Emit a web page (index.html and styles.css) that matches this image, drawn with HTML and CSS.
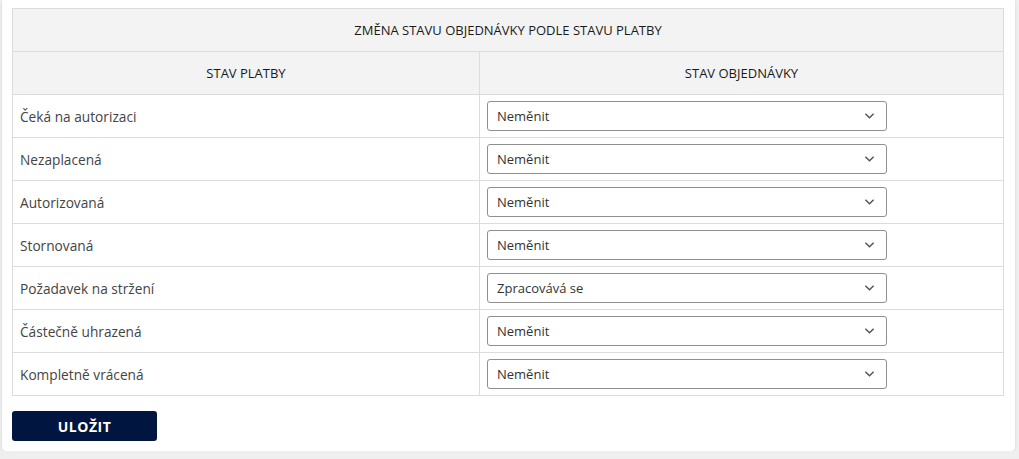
FILE: index.html
```html
<!DOCTYPE html>
<html lang="cs">
<head>
<meta charset="utf-8">
<link rel="stylesheet" href="styles.css">
</head>
<body>
<div class="card">
  <table class="status-table">
    <colgroup><col class="col-a"><col class="col-b"></colgroup>
    <thead>
      <tr><th colspan="2" class="title">ZMĚNA STAVU OBJEDNÁVKY PODLE STAVU PLATBY</th></tr>
      <tr><th>STAV PLATBY</th><th>STAV OBJEDNÁVKY</th></tr>
    </thead>
    <tbody>
      <tr><td>Čeká na autorizaci</td><td><div class="select"><span>Neměnit</span><svg class="chev" viewBox="0 0 12 8"><path d="M1.5 1.5 6 6l4.5-4.5"/></svg></div></td></tr>
      <tr><td>Nezaplacená</td><td><div class="select"><span>Neměnit</span><svg class="chev" viewBox="0 0 12 8"><path d="M1.5 1.5 6 6l4.5-4.5"/></svg></div></td></tr>
      <tr><td>Autorizovaná</td><td><div class="select"><span>Neměnit</span><svg class="chev" viewBox="0 0 12 8"><path d="M1.5 1.5 6 6l4.5-4.5"/></svg></div></td></tr>
      <tr><td>Stornovaná</td><td><div class="select"><span>Neměnit</span><svg class="chev" viewBox="0 0 12 8"><path d="M1.5 1.5 6 6l4.5-4.5"/></svg></div></td></tr>
      <tr><td>Požadavek na stržení</td><td><div class="select"><span>Zpracovává se</span><svg class="chev" viewBox="0 0 12 8"><path d="M1.5 1.5 6 6l4.5-4.5"/></svg></div></td></tr>
      <tr><td>Částečně uhrazená</td><td><div class="select"><span>Neměnit</span><svg class="chev" viewBox="0 0 12 8"><path d="M1.5 1.5 6 6l4.5-4.5"/></svg></div></td></tr>
      <tr><td>Kompletně vrácená</td><td><div class="select"><span>Neměnit</span><svg class="chev" viewBox="0 0 12 8"><path d="M1.5 1.5 6 6l4.5-4.5"/></svg></div></td></tr>
    </tbody>
  </table>
  <button class="save">ULOŽIT</button>
</div>
</body>
</html>
```
FILE: styles.css
```css
html, body {
  margin: 0;
  padding: 0;
  background: #efefef;
  font-family: "Open Sans", "Liberation Sans", sans-serif;
  color: #333;
}
.card {
  margin-left: 2px;
  width: 1013px;
  height: 451px;
  box-sizing: border-box;
  background: #fff;
  border-radius: 0 0 4px 4px;
  box-shadow: 0 1px 3px rgba(0,0,0,0.12);
  padding: 8px 10px 0 10px;
}
.status-table {
  width: 992px;
  border-collapse: collapse;
  table-layout: fixed;
}
.col-a { width: 467px; }
.status-table th, .status-table td {
  border: 1px solid #dcdcdc;
  height: 43px;
  padding: 0;
  box-sizing: border-box;
}
.status-table th {
  background: #f3f3f3;
  font-size: 13px;
  font-weight: 500;
  color: #1a1a1a;
  text-align: center;
}
.status-table td {
  font-size: 13.7px;
  color: #444;
}
.status-table td:first-child,
.status-table td:last-child {
  padding-left: 7px;
}
.select {
  width: 400px;
  height: 30px;
  box-sizing: border-box;
  border: 1px solid #8f8f8f;
  border-radius: 3px;
  display: flex;
  align-items: center;
  justify-content: space-between;
  padding: 0 11px 0 9px;
  font-size: 13px;
  color: #333;
}
.chev {
  width: 11px;
  height: 8px;
  fill: none;
  stroke: #555;
  stroke-width: 1.6;
}
.save {
  margin-top: 15px;
  width: 145px;
  height: 30px;
  border: none;
  border-radius: 3px;
  background: #001540;
  color: #fff;
  font-family: "Open Sans", "Liberation Sans", sans-serif;
  font-weight: 700;
  font-size: 14px;
  letter-spacing: 0.5px;
  cursor: pointer;
}
```
